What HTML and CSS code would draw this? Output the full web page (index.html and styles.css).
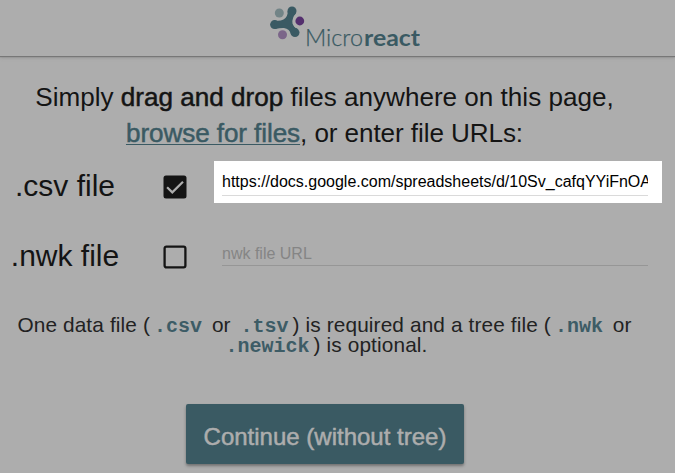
FILE: index.html
```html
<!DOCTYPE html>
<html lang="en">
<head>
<meta charset="utf-8">
<title>Microreact</title>
<link rel="stylesheet" href="styles.css">
</head>
<body>
<header class="header">
  <svg class="logo" viewBox="0 0 160 52" width="160" height="52" role="img" aria-label="Microreact">
    <g fill="none" stroke="#3a5a63" stroke-linecap="round">
      <path d="M14.4 24.5L28 23.5M31.6 11.5L28 23.5M35.2 32.5L28 23.5" stroke-width="5.5"/>
    </g>
    <g fill="#3a5a63">
      <circle cx="14.6" cy="24.6" r="4.5"/>
      <circle cx="32" cy="11" r="4.5"/>
      <circle cx="35" cy="32.6" r="4.5"/>
      <path d="M14 20.2Q19 21.7 23.5 19.5Q28 17 27.7 11L36 13Q31.5 18.5 32.5 23.5Q33.5 27.5 37.5 29L31.5 35.2Q29.5 28.5 24 28Q20.5 27.8 15 29Z"/>
    </g>
    <circle cx="19.3" cy="13" r="4.5" fill="#728487"/>
    <circle cx="39.8" cy="21" r="4.4" fill="#542f6e"/>
    <circle cx="22.5" cy="34.8" r="4.5" fill="#7b6589"/>
    <text class="logo-light" x="45" y="45.5" textLength="58" lengthAdjust="spacingAndGlyphs">Micro</text>
    <text class="logo-bold" x="104" y="45.5" textLength="56" lengthAdjust="spacingAndGlyphs">react</text>
  </svg>
</header>
<main class="main">
  <p class="intro">Simply <span class="medium">drag and drop</span> files anywhere on this page,<br><span class="tight"><a class="browse medium">browse for files</a>, or enter file URLs:</span></p>
  <div class="row">
    <span class="label">.csv file</span>
    <svg class="check" viewBox="0 0 24 24" width="24" height="24"><rect x=".5" y=".5" width="23" height="23" rx="2.5" fill="#141414"/><path d="M4.1 12.2L9.3 17.4L20 6.7" fill="none" stroke="#adadad" stroke-width="2.2"/></svg>
    <div class="field active"><input class="input" value="https://docs.google.com/spreadsheets/d/10Sv_cafqYYiFnOAbcde"></div>
  </div>
  <div class="row">
    <span class="label">.nwk file</span>
    <svg class="check" viewBox="0 0 24 24" width="24" height="24"><rect x="1.6" y="1.6" width="20.8" height="20.8" rx="1.8" fill="none" stroke="#141414" stroke-width="2.3"/></svg>
    <div class="field"><input class="input" placeholder="nwk file URL"></div>
  </div>
  <p class="help">One data file (<code>.csv</code> or <code>.tsv</code>) is required and a tree file (<code>.nwk</code> or<br><code>.newick</code>) is optional.</p>
  <button class="continue medium">Continue (without tree)</button>
</main>
</body>
</html>
```
FILE: styles.css
```css
* { box-sizing: border-box; }
body {
  margin: 0;
  height: 473px;
  overflow: hidden;
  background: #adadad;
  color: #141414;
  font-family: "Liberation Sans", Arial, sans-serif;
}
.header {
  height: 56px;
  padding-left: 260px;
  box-shadow: 0 1px 1px #777, 0 2px 3px #999;
}
.logo { display: block; }
.logo text { font-family: Lato, sans-serif; font-size: 23px; fill: #3a5a63; }
.logo .logo-light { font-weight: 300; stroke: #3a5a63; stroke-width: .25px; }
.logo .logo-bold { font-weight: 700; }
.main { display: flex; flex-direction: column; padding-top: 23px; }
.intro {
  width: 649px;
  margin: 0;
  height: 72px;
  font-size: 26.08px;
  line-height: 36px;
  text-align: center;
  white-space: nowrap;
}
.medium { -webkit-text-stroke: 0.5px currentColor; }
.tight { letter-spacing: -.08px; }
.browse {
  color: #3a5a63;
  text-decoration: underline;
  text-decoration-thickness: 1px;
  text-underline-offset: 2px;
}
.row { display: flex; height: 70px; padding-top: 10px; }
.label {
  width: 130px;
  margin-right: 33px;
  padding-top: 8px;
  font-size: 30px;
  line-height: 34px;
  text-align: center;
}
.check { margin: 14px 27px 0 0; }
.field { width: 448px; height: 42px; padding: 0 14px 0 8px; }
.active { background: #fff; }
.input {
  display: block;
  width: 426px;
  height: 35px;
  margin: 0;
  padding: 11px 0 0;
  border: 0;
  border-bottom: 1px solid #969696;
  background: transparent;
  color: #141414;
  font: 16px "Liberation Sans", Arial, sans-serif;
  outline: 0;
}
.active .input { padding-top: 8px; border-color: #dadada; color: #000; }
.input::placeholder { color: #858585; opacity: 1; }
.help {
  width: 649px;
  margin: 24px 0 0;
  height: 89px;
  font-size: 20.8px;
  letter-spacing: .13px;
  line-height: 20px;
  text-align: center;
  white-space: nowrap;
  color: #222;
}
.help code {
  padding: 0 4px;
  font: bold 20px/0 "Liberation Mono", monospace;
  letter-spacing: 0;
  color: #3d5c66;
}
.continue {
  width: 278px;
  height: 60px;
  margin-left: 186px;
  padding: 5px 0 0;
  border: 0;
  border-radius: 2px;
  background: #3a5a63;
  box-shadow: 0 2px 3px rgba(0, 0, 0, .35);
  color: #adadad;
  font: 24px "Liberation Sans", Arial, sans-serif;
}
```
